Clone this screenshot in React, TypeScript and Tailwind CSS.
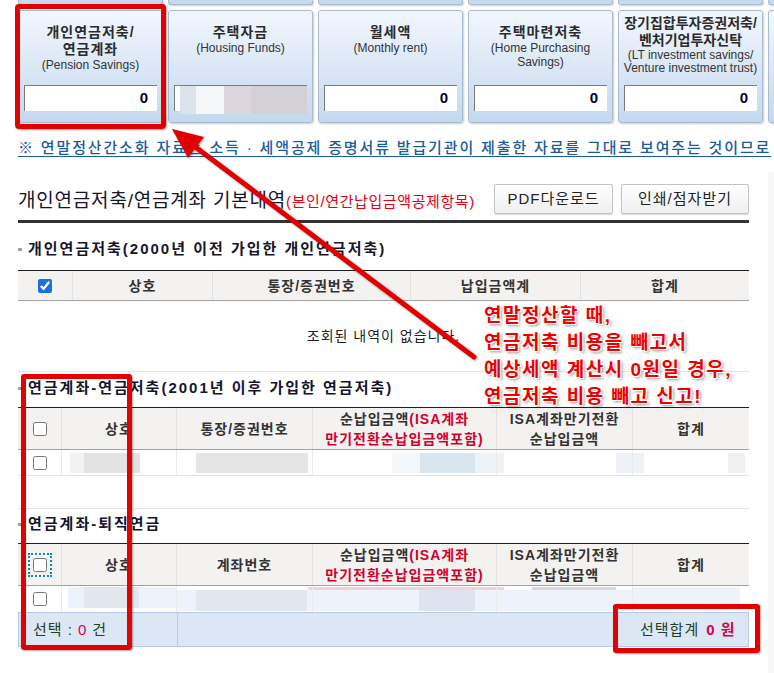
import React from "react";

type Blk = [number, number, string];

const font = "font-['Liberation_Sans','Noto_Sans_CJK_KR',sans-serif]";

const cards = [
  { ko: ["개인연금저축/", "연금계좌"], en: ["(Pension Savings)"], pt: "pt-[13px]" },
  { ko: ["주택자금"], en: ["(Housing Funds)"], pt: "pt-[13px]", blurred: true },
  { ko: ["월세액"], en: ["(Monthly rent)"], pt: "pt-[13px]" },
  { ko: ["주택마련저축"], en: ["(Home Purchasing", "Savings)"], pt: "pt-[13px]" },
  {
    ko: ["장기집합투자증권저축/", "벤처기업투자신탁"],
    en: ["(LT investment savings/", "Venture investment trust)"],
    pt: "pt-[4px]",
    tight: true,
  },
  { ko: [], en: [], pt: "pt-[13px]" },
];

function Card({ c }: { c: (typeof cards)[number] }) {
  return (
    <div className="flex h-[113px] w-[145px] shrink-0 flex-col rounded-[3px] border border-[#a8bbd1] bg-linear-to-b from-[#f2f7fe] to-[#c4d8ee] shadow-[1px_1px_2px_rgba(0,0,0,0.2)]">
      <div className={`text-center ${c.pt}`}>
        {c.ko.map((l) => (
          <div
            key={l}
            className={`whitespace-nowrap text-[14px] font-bold leading-[17px] text-[#2b2b2b] ${c.tight ? "tracking-[0px]" : "tracking-[1px]"}`}
          >
            {l}
          </div>
        ))}
        {c.en.map((l) => (
          <div
            key={l}
            className={`whitespace-nowrap text-[12px] tracking-[0px] text-[#333] ${c.tight ? "leading-[13px]" : "leading-[14px]"}`}
          >
            {l}
          </div>
        ))}
      </div>
      {c.ko.length > 0 && (
        <div className="mx-[5px] mb-[11px] mt-auto h-[26px] border-l border-t border-[#7b7b7b] border-b-[#e6e6e6] border-r-[#e6e6e6] bg-white">
          {c.blurred ? (
            <div className="flex h-[28px]">
              <div className="ml-[5px] w-[16px] bg-[#dde3ea]" />
              <div className="w-[28px] bg-[#f5f6f8]" />
              <div className="w-[28px] bg-[#dcd6dc]" />
              <div className="w-[56px] bg-[#d3d1d6]" />
            </div>
          ) : (
            <div className="pr-[9px] text-right text-[15px] font-bold leading-[24px] text-[#000033]">0</div>
          )}
        </div>
      )}
    </div>
  );
}

function Sub({ children }: { children: React.ReactNode }) {
  return (
    <div className="flex items-center whitespace-nowrap text-[15px] font-bold leading-[20px] tracking-[2px] text-[#15152b]">
      <span className="mr-[6px] h-[3px] w-[4px] bg-[#a0a0a0]" />
      {children}
    </div>
  );
}

function Blur({ blocks, h = 20 }: { blocks: Blk[]; h?: number }) {
  return (
    <div className="flex">
      {blocks.map(([ml, w, c], i) => (
        <div key={i} style={{ marginLeft: ml, width: w, height: h, background: c }} />
      ))}
    </div>
  );
}

const th = "flex items-center justify-center border-r border-[#e2e2e2] text-center text-[14px] font-bold leading-[20px] tracking-[1px] text-[#333] last:border-r-0";
const td = "flex flex-col justify-center border-r border-[#ebebeb] last:border-r-0";
const cols6 = "grid-cols-[44px_115px_136px_184px_136px_116px]";

function Box() {
  return <input type="checkbox" readOnly className="m-0 h-[14px] w-[14px]" />;
}

function Head6({ third, focus }: { third: string; focus?: boolean }) {
  return (
    <div className={`grid h-[43px] ${cols6} border-b border-t border-b-[#a3a3a3] border-t-[#1e1e1e] bg-[#f3f2f0]`}>
      <div className={th}>
        {focus ? (
          <span className="flex h-[24px] w-[24px] items-center justify-center border-2 border-dotted border-[#17879a]">
            <Box />
          </span>
        ) : (
          <Box />
        )}
      </div>
      <div className={th}>상호</div>
      <div className={th}>{third}</div>
      <div className={th}>
        <div>
          순납입금액<span className="text-[#d1002c]">(ISA계좌</span>
          <br />
          <span className="text-[#d1002c]">만기전환순납입금액포함)</span>
        </div>
      </div>
      <div className={th}>
        <div>
          ISA계좌만기전환
          <br />
          순납입금액
        </div>
      </div>
      <div className={th}>합계</div>
    </div>
  );
}

const row2: Blk[][] = [
  [[8, 14, "#f2f2f2"], [0, 56, "#e3e3e3"]],
  [[19, 112, "#e5e5e5"]],
  [[79, 28, "#f4f7fa"], [0, 56, "#dae6ef"], [0, 21, "#eef3f7"]],
  [[0, 7, "#eef3f7"], [112, 17, "#eef2f6"]],
  [[0, 11, "#eef2f6"], [84, 17, "#f0f0f0"]],
];

const row3: Blk[][] = [
  [[6, 16, "#eef2fa"], [0, 56, "#e1e6ef"], [0, 37, "#eef2fa"]],
  [[0, 19, "#eef2fa"], [0, 112, "#e1e6ef"], [0, 5, "#eef2fa"]],
  [[0, 107, "#eef2fa"], [0, 56, "#dbe4ef"], [0, 21, "#eef2fa"]],
  [[0, 136, "#eef2fa"]],
  [[0, 107, "#eef2fa"]],
];

const strip3: Blk[][] = [
  [],
  [[131, 5, "#f2d4d8"]],
  [[0, 184, "#f2d4d8"]],
  [[0, 7, "#f2d4d8"], [28, 84, "#d8d7db"]],
  [],
];

export default function App() {
  return (
    <div className={`relative h-[673px] w-[774px] overflow-hidden bg-white text-[#222] ${font}`}>
      {/* bottom edges of the row above */}
      <div className="flex gap-[5px] pl-[18px]">
        {cards.map((_, i) => (
          <div
            key={i}
            className="h-[5px] w-[145px] shrink-0 rounded-b-[3px] border-x border-b border-[#a8bbd1] bg-[#c6daef] shadow-[1px_1px_2px_rgba(0,0,0,0.2)]"
          />
        ))}
      </div>

      <div className="mt-[5px] flex gap-[5px] pl-[18px]">
        {cards.map((c, i) => (
          <Card key={i} c={c} />
        ))}
      </div>

      <div className="mt-[15px] whitespace-nowrap pl-[18px] text-[15px] font-medium leading-[20px] tracking-[1.85px] text-[#1b5c9b] underline underline-offset-[3px]">
        ※ 연말정산간소화 자료는 소득 · 세액공제 증명서류 발급기관이 제출한 자료를 그대로 보여주는 것이므로
      </div>

      <div className="mt-[14px] flex">
        <div className="w-[768px] shrink-0 pl-[18px] pr-[19px] pt-[12px]">
          {/* title + buttons */}
          <div className="flex items-end justify-between border-b-[3px] border-[#333] pb-[6px]">
            <div className="whitespace-nowrap leading-[24px] text-[#15152b]">
              <span className="text-[19px] tracking-[0.8px]">개인연금저축/연금계좌 기본내역</span>
              <span className="text-[15px] tracking-[0.6px] text-[#e60012]">(본인/연간납입금액공제항목)</span>
            </div>
            <div className="flex gap-[8px]">
              <button className="h-[30px] w-[119px] rounded-[2px] border border-[#c4c4c4] bg-linear-to-b from-white to-[#efefef] text-[15px] tracking-[1px] text-[#222] shadow-[0_1px_1px_rgba(0,0,0,0.15)]">
                PDF다운로드
              </button>
              <button className="h-[30px] w-[128px] rounded-[2px] border border-[#c4c4c4] bg-linear-to-b from-white to-[#efefef] text-[15px] tracking-[1px] text-[#222] shadow-[0_1px_1px_rgba(0,0,0,0.15)]">
                인쇄/점자받기
              </button>
            </div>
          </div>

          {/* section 1 */}
          <div className="mt-[16px]">
            <Sub>개인연금저축(2000년 이전 가입한 개인연금저축)</Sub>
          </div>
          <div className="mt-[11px]">
            <div className="grid h-[31px] grid-cols-[55px_140px_198px_170px_168px] border-b border-t border-b-[#a3a3a3] border-t-[#1e1e1e] bg-[#f3f2f0]">
              <div className={th}>
                <input type="checkbox" defaultChecked className="m-0 h-[14px] w-[14px] accent-[#1a6fe3]" />
              </div>
              <div className={th}>상호</div>
              <div className={th}>통장/증권번호</div>
              <div className={th}>납입금액계</div>
              <div className={th}>합계</div>
            </div>
            <div className="flex h-[71px] items-center justify-center border-b border-[#e3e3e3] text-[14px] tracking-[1px] text-[#222]">
              조회된 내역이 없습니다.
            </div>
          </div>

          {/* section 2 */}
          <div className="mt-[6px]">
            <Sub>연금계좌-연금저축(2001년 이후 가입한 연금저축)</Sub>
          </div>
          <div className="mt-[9px]">
            <Head6 third="통장/증권번호" />
            <div className={`grid h-[26px] ${cols6} border-b border-[#e3e3e3]`}>
              <div className={`${td} items-center`}>
                <Box />
              </div>
              {row2.map((b, i) => (
                <div key={i} className={td}>
                  <Blur blocks={b} />
                </div>
              ))}
            </div>
            <div className="h-[33px] border-b border-[#e3e3e3]" />
          </div>

          {/* section 3 */}
          <div className="mt-[5px]">
            <Sub>연금계좌-퇴직연금</Sub>
          </div>
          <div className="mt-[9px]">
            <Head6 third="계좌번호" focus />
            <div className={`grid h-[26px] ${cols6}`}>
              <div className={`${td} items-center`}>
                <Box />
              </div>
              {row3.map((b, i) => (
                <div key={i} className="flex flex-col justify-start border-r border-[#ebebeb] pt-[1px] last:border-r-0">
                  <Blur blocks={strip3[i]} h={3} />
                  <Blur blocks={b} h={21} />
                </div>
              ))}
            </div>
            <div className="grid h-[35px] grid-cols-[159px_440px_132px] border border-[#b7cae4] bg-[#dce7f6] text-[15px] leading-[20px] text-[#21402a]">
              <div className="flex items-center border-r border-[#b7cae4] pl-[14px] tracking-[1px]">
                선택 : <span className="mx-[5px] text-[#e0004f]">0</span> 건
              </div>
              <div className="border-r border-[#c9d7ea]" />
              <div className="flex items-center pl-[22px] tracking-[1px]">
                선택합계 <span className="ml-[7px] font-bold text-[#d6004c]">0 원</span>
              </div>
            </div>
          </div>
        </div>
        <div className="h-[520px] flex-1 bg-[#f6f6f6]" />
      </div>

      {/* annotation overlays */}
      <div className="absolute left-[15px] top-[4px] h-[125px] w-[151px] rounded-[4px] border-[5px] border-[#e30000] shadow-[1px_1px_2px_rgba(0,0,0,0.35)]" />
      <div className="absolute left-[21px] top-[374px] h-[276px] w-[111px] rounded-[3px] border-[5px] border-[#e30000] shadow-[1px_1px_2px_rgba(0,0,0,0.35)]" />
      <div className="absolute left-[613px] top-[604px] h-[49px] w-[147px] rounded-[3px] border-[5px] border-[#e30000] shadow-[1px_1px_2px_rgba(0,0,0,0.35)]" />

      <svg className="absolute left-0 top-0 drop-shadow-[1px_1px_1px_rgba(0,0,0,0.35)]" width="774" height="673">
        <line x1="474" y1="357" x2="194" y2="146" stroke="#e00000" strokeWidth="5" strokeLinecap="round" />
        <polygon points="172,129 204,137 188,158" fill="#e00000" />
      </svg>

      <div className="absolute left-[484px] top-[302px] whitespace-nowrap text-[19px] font-bold leading-[27px] tracking-[1.5px] text-[#ee0000] [text-shadow:-1px_-1px_0_#fff,1px_-1px_0_#fff,-1px_1px_0_#fff,1px_1px_0_#fff,2px_2px_3px_rgba(0,0,0,0.45)]">
        <div>연말정산할 때,</div>
        <div>연금저축 비용을 빼고서</div>
        <div>예상세액 계산시 0원일 경우,</div>
        <div>연금저축 비용 빼고 신고!</div>
      </div>
    </div>
  );
}
